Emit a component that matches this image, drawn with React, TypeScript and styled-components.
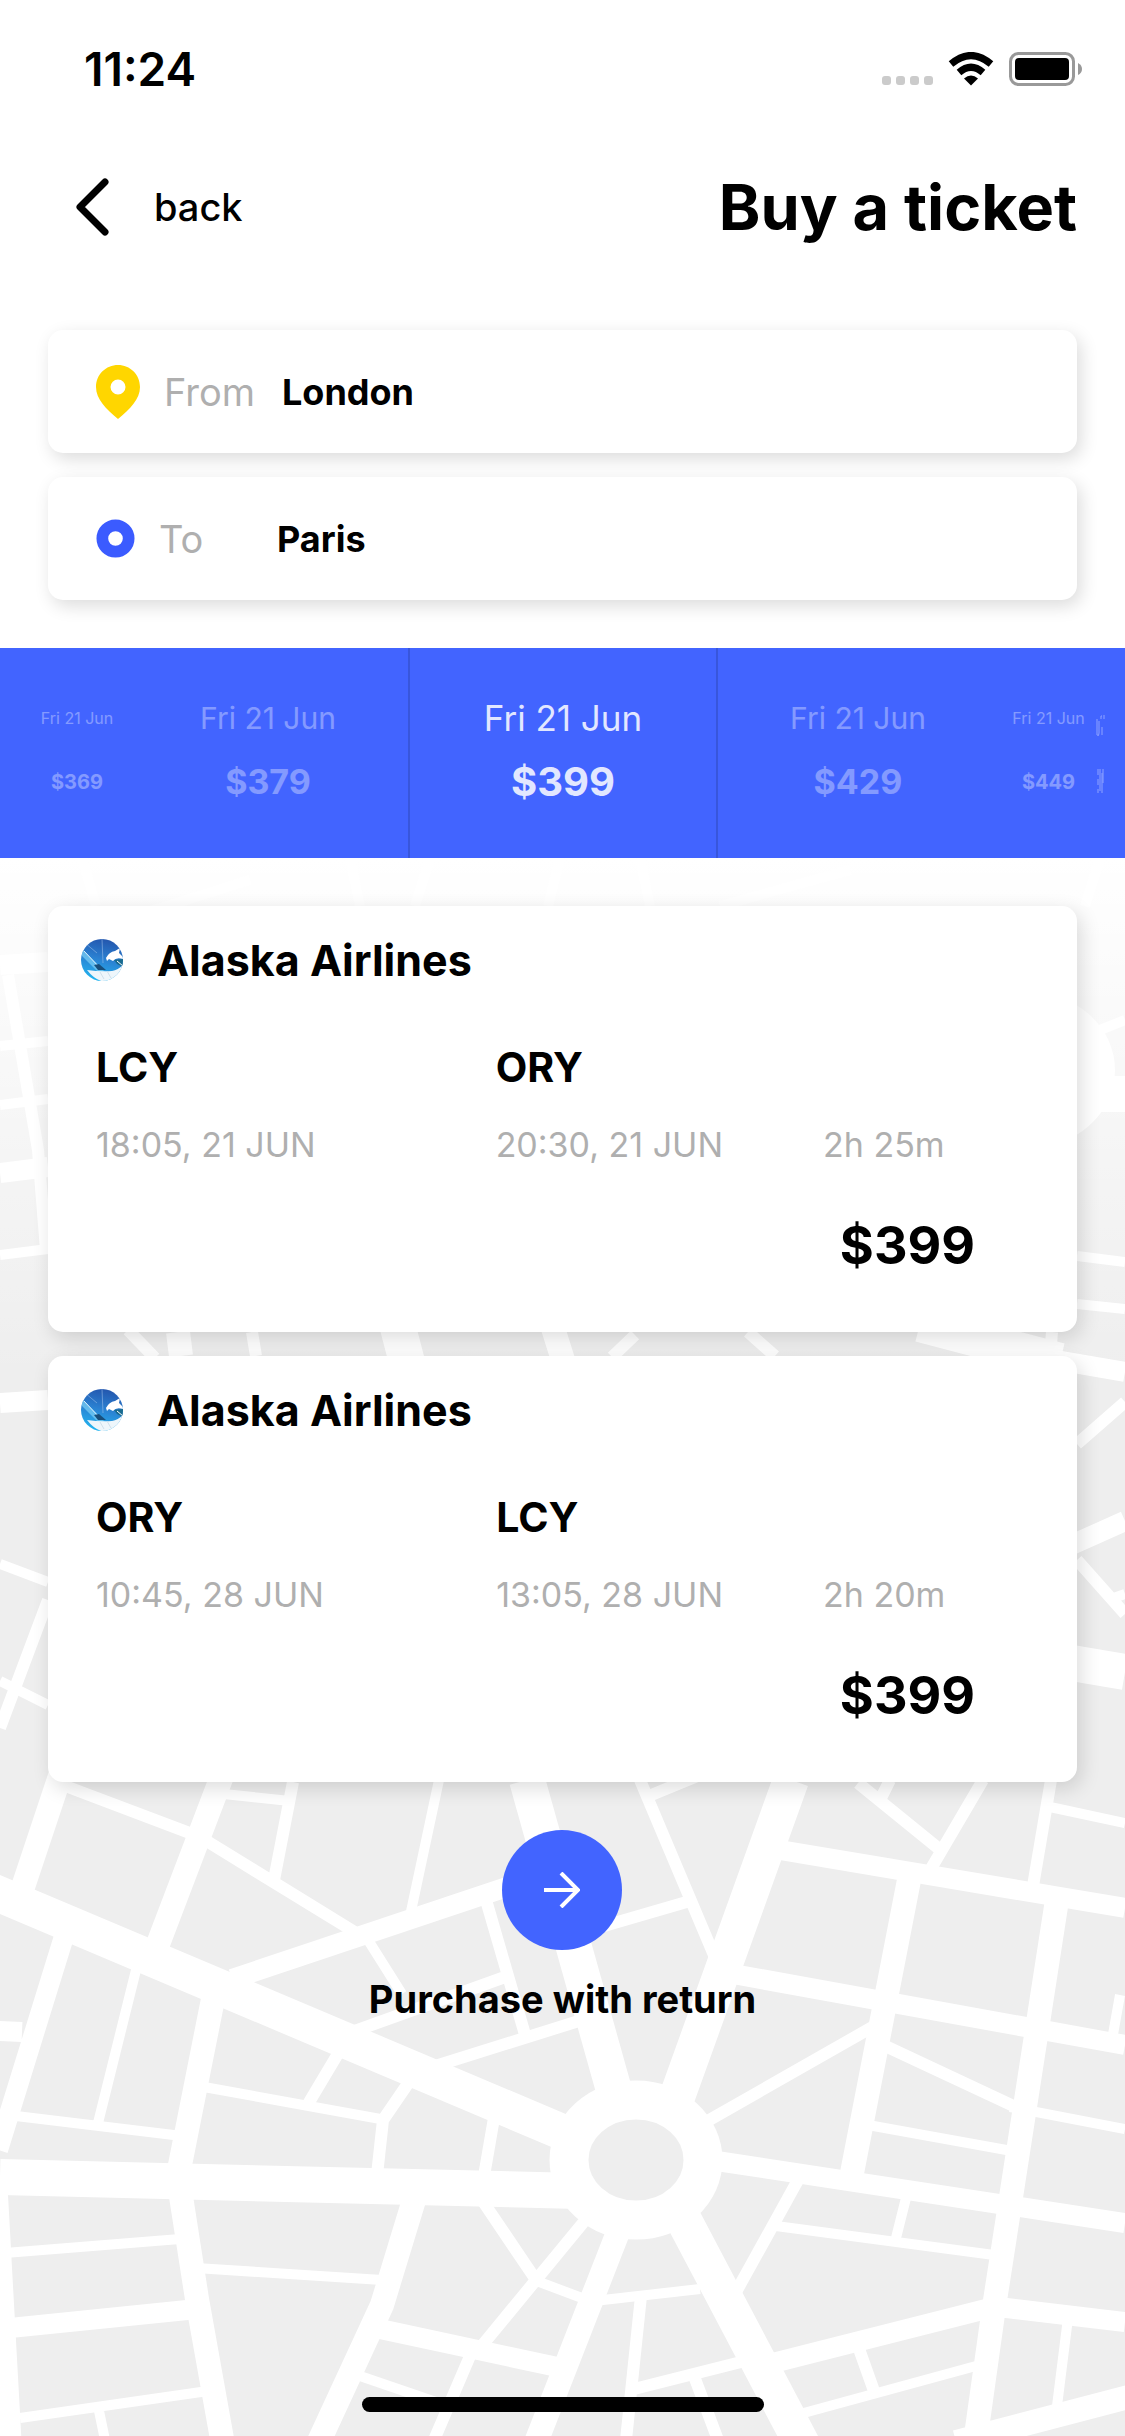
import React from "react";
import styled, { createGlobalStyle } from "styled-components";

const GlobalStyle = createGlobalStyle`
  * { box-sizing: border-box; }
  html, body { margin: 0; background: #fff; }
  body, button, input { font-family: Inter, "Noto Sans", sans-serif; color: #000; }
  button { border: 0; padding: 0; background: none; cursor: pointer; }
  h1, h2, p { margin: 0; }
`;

const Screen = styled.div`
  min-height: 100vh;
  display: flex;
  flex-direction: column;
`;

const StatusBar = styled.div`
  display: flex;
  align-items: center;
  justify-content: space-between;
  height: 132px;
  padding: 6px 42px 0 84px;
`;

const Clock = styled.time`
  font-size: 46px;
  line-height: 48px;
  font-weight: 600;
`;

const StatusIcons = styled.div`
  display: flex;
  align-items: center;
  gap: 15px;
`;

const Header = styled.header`
  display: flex;
  align-items: center;
  justify-content: space-between;
  height: 150px;
  padding: 0 48px 0 74px;
`;

const BackButton = styled.button`
  display: flex;
  align-items: center;
  gap: 42px;
  font-size: 38px;
  line-height: 48px;
  font-weight: 500;
`;

const Title = styled.h1`
  font-size: 63px;
  line-height: 72px;
  font-weight: 700;
`;

const Route = styled.form`
  display: flex;
  flex-direction: column;
  gap: 24px;
  padding: 48px;
`;

const Field = styled.label`
  display: flex;
  align-items: center;
  height: 123px;
  padding: 0 48px;
  border-radius: 15px;
  background: #fff;
  box-shadow: 4px 6px 18px rgba(0, 0, 0, 0.14);
`;

const FieldName = styled.span`
  width: 118px;
  margin-left: 24px;
  font-size: 38px;
  line-height: 48px;
  font-weight: 400;
  color: #afafaf;
`;

const FieldInput = styled.input`
  flex: 1;
  min-width: 0;
  border: 0;
  padding: 0;
  outline: 0;
  background: none;
  font-size: 36px;
  line-height: 48px;
  font-weight: 700;
`;

const DateStrip = styled.nav`
  display: grid;
  grid-template-columns: 154fr 228fr 26fr 310fr 26fr 228fr 105fr 48fr;
  height: 210px;
  background: #4264ff;
`;

type Depth = "near" | "middle" | "far";

const DateOption = styled.button<{ $depth: Depth; $column: string }>`
  grid-column: ${(p) => p.$column};
  grid-row: 1;
  display: flex;
  flex-direction: column;
  align-items: center;
  justify-content: center;
  padding-bottom: 6px;
  color: #fff;
  white-space: nowrap;
  border: solid #3856dc;
  border-width: ${(p) => (p.$depth === "near" ? "0 2px" : "0")};
`;

const OptionDate = styled.span<{ $depth: Depth }>`
  font-size: ${(p) => ({ near: 35, middle: 30, far: 16 })[p.$depth]}px;
  line-height: 64px;
  font-weight: 400;
  opacity: ${(p) => (p.$depth === "near" ? 0.85 : 0.35)};
`;

const OptionPrice = styled.span<{ $depth: Depth }>`
  font-size: ${(p) => ({ near: 40, middle: 34, far: 20 })[p.$depth]}px;
  line-height: 64px;
  font-weight: 700;
  opacity: ${(p) => (p.$depth === "near" ? 0.85 : 0.35)};
`;

const FoldedOption = styled.svg`
  grid-column: 8;
  grid-row: 1;
  align-self: center;
  justify-self: center;
`;

const Results = styled.main`
  position: relative;
  z-index: 0;
  flex: 1;
  display: flex;
  flex-direction: column;
  align-items: center;
  gap: 24px;
  padding: 48px 48px 24px;
`;

const MapBackdrop = styled.div`
  position: absolute;
  inset: 0;
  z-index: -1;
  overflow: hidden;
  background: #eee;

  svg {
    display: block;
    width: 100%;
    height: 100%;
  }

  &::after {
    content: "";
    position: absolute;
    inset: 0 0 auto;
    height: 520px;
    background: linear-gradient(#fff, rgba(255, 255, 255, 0));
  }
`;

const Ticket = styled.article`
  width: 100%;
  height: 426px;
  border-radius: 15px;
  background: #fff;
  box-shadow: 4px 6px 20px rgba(0, 0, 0, 0.14);
`;

const Airline = styled.div`
  display: flex;
  align-items: center;
  gap: 34px;
  height: 108px;
  padding: 0 33px;
`;

const AirlineName = styled.h2`
  font-size: 43px;
  line-height: 54px;
  font-weight: 700;
`;

const Legs = styled.div`
  display: grid;
  grid-template-columns: 1fr auto 206px;
  align-items: end;
  padding: 14px 48px 0;
`;

const Stop = styled.div`
  padding-right: 100px;
`;

const Code = styled.p`
  font-size: 41px;
  line-height: 78px;
  font-weight: 700;
`;

const Detail = styled.p`
  font-size: 34px;
  line-height: 78px;
  font-weight: 400;
  color: #afafaf;
  white-space: nowrap;
`;

const Price = styled.p`
  padding: 26px 102px 0 0;
  text-align: right;
  font-size: 52px;
  line-height: 72px;
  font-weight: 700;
`;

const Purchase = styled.button`
  display: flex;
  flex-direction: column;
  align-items: center;
  gap: 24px;
  margin-top: 24px;
  font-size: 38px;
  line-height: 50px;
  font-weight: 700;
`;

const Disc = styled.span`
  display: grid;
  place-items: center;
  width: 120px;
  height: 120px;
  border-radius: 50%;
  background: #4264ff;
`;

const HomeIndicator = styled.div`
  width: 402px;
  height: 15px;
  margin-top: auto;
  border-radius: 8px;
  background: #000;
`;

// Street centre lines, grouped by stroke width, in a 1125 x 1578 frame that starts at y = 858.
const streets: [number, string][] = [
  [36, "M-20 1886L600 2148M0 2177L620 2192M527 1780L624 2126M791 1780L668 2122M668 2190L804 2448M1100 1094H1125M1060 1661L1125 1672M920 1324L1060 1361M396 1320L408 1366"],
  [24, "M909 1880L852 2173M1057 1900L994 2307L974 2450M414 2200L382 2305L315 2450M180 2190L197 2299L224 2450M214 1994L179 2170M622 2222L533 2450M956 2442L1140 2394M62 1770L20 1896M222 1776L155 1952M178 1332L181 1356M552 1325L563 1360M-4 2195L10 2450"],
  [20, "M690 2157L1125 2223M774 1849L1125 1908M733 1974L1125 2045M990 2306L1125 2322M765 2365L994 2307M380 2329L562 2368M10 2328L197 2309M232 1979L510 1886M66 1930L-2 2150M-2 2031L22 2032M0 965L48 962M0 1403L48 1400M1050 1359L1125 1372M1060 1550L1125 1521M0 1173L48 1167"],
  [12, "M983 1780L929 1872M1051 1780L1033 1886M858 1783L938 1848M890 1780L880 1800M640 1780L716 1960M644 1798L700 1775M604 1926L690 1901M704 2123L876 2025M881 2044L1018 2108M798 2180L736 2292M858 2346L874 2391M630 2390L745 2361M641 2296L626 2440M694 2376L718 2440M587 2218L480 2348M482 2200L536 2280M470 2356L434 2440M60 1784L200 1837L358 1934M293 1782L274 1880M352 2032L505 1977M432 2067L582 2020M339 2052L308 2104M409 2082L383 2120L377 2175M494 2118L484 2176M486 1900L526 2038M8 975L38 1150L46 1250M0 1728L48 1600M1077 1444L1125 1402M1077 1560L1125 1614M252 1332L256 1356M128 1330L155 1358M612 1357L635 1335M748 1332L775 1356M1052 1332L1050 1356"],
  [10, "M1050 1807L1125 1823M1010 2107L1125 2129M868 2125L1012 2151M1120 1995L1112 2040M776 2226L994 2255M906 2198L896 2238M800 2414L976 2366M1068 2318L1056 2414M594 2301L700 2289M534 2280L590 2301M360 2376L436 2402M196 2268L382 2280M5 2253L180 2239M20 2418L208 2391M98 2406L105 2440M138 1962L98 2123M16 2116L182 2136M224 1794L290 1801M439 1780L410 1916M368 1940L402 1994M204 2087L386 2120M0 1046L48 1041M0 1105L48 1099M0 1255L48 1249M0 1564L48 1582M0 1681L48 1705M1100 1030L1125 1020M1077 1256L1125 1262M1077 1304L1125 1309M1108 1600L1125 1594M82 858L96 906M90 930L250 880M350 858L360 906M430 858L415 906M560 858L548 906M640 858L650 906M720 906L850 870M1085 906L1100 858"],
];

const StreetMap = () => (
  <MapBackdrop aria-hidden="true">
    <svg viewBox="0 858 1125 1578" preserveAspectRatio="xMidYMin slice" fill="none" stroke="#fff">
      {streets.map(([width, d]) => (
        <path key={width} d={d} strokeWidth={width} />
      ))}
      <ellipse cx="1028" cy="1070" rx="67" ry="58" strokeWidth="40" />
      <ellipse cx="636" cy="2160" rx="67" ry="60" strokeWidth="39" fill="#eee" />
    </svg>
  </MapBackdrop>
);

const AirlineLogo = () => (
  <svg width="42" height="42" viewBox="0 0 42 42" aria-hidden="true">
    <defs>
      <clipPath id="disc">
        <circle cx="21" cy="21" r="21" />
      </clipPath>
      <linearGradient id="sky" x1="0.6" y1="0" x2="0.4" y2="1">
        <stop offset="0" stopColor="#2456ad" />
        <stop offset="0.5" stopColor="#2b83d3" />
        <stop offset="1" stopColor="#23b5f0" />
      </linearGradient>
    </defs>
    <g clipPath="url(#disc)">
      <rect width="42" height="42" fill="url(#sky)" />
      <path d="M0 9L25 34H18L-2 14Z" fill="#7fd0f5" opacity="0.7" />
      <path d="M3 12L20 30" stroke="#dff4ff" strokeWidth="1" />
      <path d="M4 4L16 14M21 0L22 24" stroke="#a9c8ee" strokeWidth="1" opacity="0.5" />
      <path d="M25 19Q28 13 34 12L39 9L38 14L42 18V20Q35 18 32 22L28 20L26 22Z" fill="#fff" />
      <path d="M33 21L42 20V28L36 25Z" fill="#186b8e" />
      <path d="M36 22L42 27" stroke="#fff" strokeWidth="1" />
      <path d="M13 26L18 25L25 31H17Z" fill="#194f7b" />
      <path d="M6 31Q20 33 31 32Q37 31 42 26V36L30 42H20Q12 39 6 31Z" fill="#eef6fb" />
      <path d="M19 33L23 40M26 32L30 39" stroke="#cfdfea" strokeWidth="1" />
    </g>
  </svg>
);

const PinIcon = () => (
  <svg width="44" height="54" viewBox="0 0 44 54" aria-hidden="true">
    <path
      fill="#ffd600"
      fillRule="evenodd"
      d="M22 0C10 0 0 9.500 0 22C0 34 10 44 22 54C34 44 44 34 44 22C44 9.500 34 0 22 0ZM22 14.500A7.500 7.500 0 1 1 22 29.500A7.500 7.500 0 1 1 22 14.500Z"
    />
  </svg>
);

const RingIcon = () => (
  <svg width="39" height="39" viewBox="0 0 40 40" aria-hidden="true">
    <circle cx="20" cy="20" r="13.500" fill="none" stroke="#3b5bff" strokeWidth="12" />
  </svg>
);

const dates: { price: string; depth: Depth; column: string }[] = [
  { price: "$369", depth: "far", column: "1" },
  { price: "$379", depth: "middle", column: "2" },
  { price: "$399", depth: "near", column: "4" },
  { price: "$429", depth: "middle", column: "6" },
  { price: "$449", depth: "far", column: "7 / 9" },
];

const tickets = [
  { from: "LCY", departs: "18:05, 21 JUN", to: "ORY", arrives: "20:30, 21 JUN", duration: "2h 25m" },
  { from: "ORY", departs: "10:45, 28 JUN", to: "LCY", arrives: "13:05, 28 JUN", duration: "2h 20m" },
];

export default function App() {
  return (
    <Screen>
      <GlobalStyle />
      <StatusBar>
        <Clock>11:24</Clock>
        <StatusIcons>
          <svg width="51" height="34" viewBox="0 0 51 34" fill="#cbcbcb" aria-hidden="true">
            {[0, 14, 28, 42].map((x) => (
              <rect key={x} x={x} y="24" width="9" height="9" rx="3" />
            ))}
          </svg>
          <svg width="46" height="34" viewBox="0 0 46 34" aria-hidden="true">
            <path d="M3 12Q23 -5 43 12" fill="none" stroke="#000" strokeWidth="7" />
            <path d="M11 20.500Q23 10 35 20.500" fill="none" stroke="#000" strokeWidth="7" />
            <path d="M16 26.500Q23 20.500 30 26.500L23 33.500Z" />
          </svg>
          <svg width="74" height="34" viewBox="0 0 74 34" aria-hidden="true">
            <rect x="1.500" y="1.500" width="63" height="31" rx="8" fill="none" stroke="#999" strokeWidth="3" />
            <rect x="6" y="6" width="54" height="22" rx="4" />
            <path d="M69 11Q73 13 73 17T69 23Z" fill="#999" />
          </svg>
        </StatusIcons>
      </StatusBar>

      <Header>
        <BackButton type="button">
          <svg width="38" height="60" viewBox="0 0 38 60" aria-hidden="true">
            <path d="M31 5L6 30L31 55" fill="none" stroke="#000" strokeWidth="7" strokeLinecap="round" strokeLinejoin="round" />
          </svg>
          back
        </BackButton>
        <Title>Buy a ticket</Title>
      </Header>

      <Route>
        <Field>
          <PinIcon />
          <FieldName>From</FieldName>
          <FieldInput type="text" defaultValue="London" />
        </Field>
        <Field>
          <RingIcon />
          <FieldName>To</FieldName>
          <FieldInput type="text" defaultValue="Paris" />
        </Field>
      </Route>

      <DateStrip aria-label="Dates">
        {dates.map((d) => (
          <DateOption key={d.price} type="button" $depth={d.depth} $column={d.column}>
            <OptionDate $depth={d.depth}>Fri 21 Jun</OptionDate>
            <OptionPrice $depth={d.depth}>{d.price}</OptionPrice>
          </DateOption>
        ))}
        <FoldedOption width="10" height="80" viewBox="0 0 10 80" fill="none" stroke="#8ea2ff" aria-hidden="true">
          <path d="M1 6V22Q3 24 3 20V8M5 6V3H6M8 2V6M6 14V22" strokeWidth="1" />
          <path d="M2 56V62M2 66V72M2 76V80M4 56V78M6 60V80M7 56V70" strokeWidth="1" />
        </FoldedOption>
      </DateStrip>

      <Results>
        <StreetMap />
        {tickets.map((t) => (
          <Ticket key={t.departs}>
            <Airline>
              <AirlineLogo />
              <AirlineName>Alaska Airlines</AirlineName>
            </Airline>
            <Legs>
              <Stop>
                <Code>{t.from}</Code>
                <Detail>{t.departs}</Detail>
              </Stop>
              <Stop>
                <Code>{t.to}</Code>
                <Detail>{t.arrives}</Detail>
              </Stop>
              <Detail>{t.duration}</Detail>
            </Legs>
            <Price>$399</Price>
          </Ticket>
        ))}
        <Purchase type="button">
          <Disc>
            <svg width="36" height="36" viewBox="0 0 36 36" fill="none" stroke="#fff" strokeWidth="4" aria-hidden="true">
              <path d="M0 18H33M17 1L34 18L17 35" />
            </svg>
          </Disc>
          Purchase with return
        </Purchase>
        <HomeIndicator />
      </Results>
    </Screen>
  );
}
